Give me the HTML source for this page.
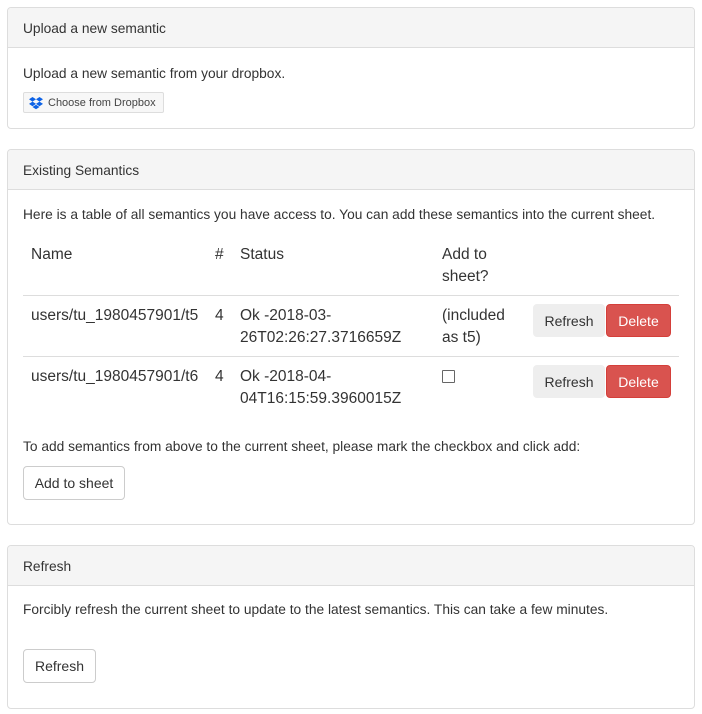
<!DOCTYPE html>
<html><head><meta charset="utf-8"><style>
*{box-sizing:border-box}
body{margin:0;width:702px;height:714px;background:#fff;font-family:"Liberation Sans",Arial,sans-serif;font-size:13.75px;color:#333;position:relative;overflow:hidden}
.panel{position:absolute;left:7px;width:688px;border:1px solid #ddd;border-radius:4px;background:#fff}
.hd{height:40px;background:#f5f5f5;border-bottom:1px solid #ddd;padding:0 15px;line-height:41px;border-radius:3px 3px 0 0}
.a{position:absolute;white-space:nowrap}
.t{font-size:15.5px;line-height:22px}
.btn{position:absolute;border:1px solid #ccc;border-radius:4px;background:#fff;text-align:center;font-size:14px;line-height:32px;color:#333}
.hr{position:absolute;left:23px;width:656px;height:1px;background:#ddd}
</style></head><body>
<div class="panel" style="top:7px;height:122px"><div class="hd">Upload a new semantic</div></div>
<div class="a" style="left:23px;top:64px;line-height:20px">Upload a new semantic from your dropbox.</div>
<div class="a" style="left:23px;top:92px;width:141px;height:21px;border:1px solid #ddd;border-radius:2px;background:#f7f7f7;font-size:11px;line-height:20px;color:#444;padding-left:24px">Choose from Dropbox
<svg style="position:absolute;left:5px;top:4px" width="14" height="13" viewBox="0 0 14 13"><path fill="#0d62e6" d="M3.5 0L0 2.3l3.5 2.3L7 2.3zM10.5 0L7 2.3l3.5 2.3L14 2.3zM0 6.9l3.5 2.3L7 6.9 3.5 4.6zM10.5 4.6L7 6.9l3.5 2.3L14 6.9zM3.5 10l3.5 2.3 3.5-2.3L7 7.7z"/></svg></div>

<div class="panel" style="top:149px;height:376px"><div class="hd">Existing Semantics</div></div>
<div class="a" style="left:23px;top:205px;line-height:20px">Here is a table of all semantics you have access to. You can add these semantics into the current sheet.</div>
<div class="a t" style="left:31px;top:244px">Name</div>
<div class="a t" style="left:215px;top:244px">#</div>
<div class="a t" style="left:240px;top:244px">Status</div>
<div class="a t" style="left:442px;top:244px">Add to<br>sheet?</div>
<div class="hr" style="top:295px"></div>
<div class="a t" style="left:31px;top:305px">users/tu_1980457901/t5</div>
<div class="a t" style="left:215px;top:305px">4</div>
<div class="a t" style="left:240px;top:305px">Ok -2018-03-<br>26T02:26:27.3716659Z</div>
<div class="a t" style="left:442px;top:305px">(included<br>as t5)</div>
<div class="btn" style="left:533px;top:304px;width:72px;height:33px;background:#eee;border-color:#eee">Refresh</div>
<div class="btn" style="left:606px;top:304px;width:65px;height:33px;background:#d9534f;border-color:#d43f3a;color:#fff">Delete</div>
<div class="hr" style="top:356px"></div>
<div class="a t" style="left:31px;top:366px">users/tu_1980457901/t6</div>
<div class="a t" style="left:215px;top:366px">4</div>
<div class="a t" style="left:240px;top:366px">Ok -2018-04-<br>04T16:15:59.3960015Z</div>
<div class="a" style="left:442px;top:370px;width:13px;height:13px;border:1px solid #666;border-radius:1px"></div>
<div class="btn" style="left:533px;top:365px;width:72px;height:33px;background:#eee;border-color:#eee">Refresh</div>
<div class="btn" style="left:606px;top:365px;width:65px;height:33px;background:#d9534f;border-color:#d43f3a;color:#fff">Delete</div>
<div class="a" style="left:23px;top:437px;line-height:20px">To add semantics from above to the current sheet, please mark the checkbox and click add:</div>
<div class="btn" style="left:23px;top:466px;width:102px;height:34px">Add to sheet</div>

<div class="panel" style="top:545px;height:164px"><div class="hd">Refresh</div></div>
<div class="a" style="left:23px;top:600px;line-height:20px">Forcibly refresh the current sheet to update to the latest semantics. This can take a few minutes.</div>
<div class="btn" style="left:23px;top:649px;width:73px;height:34px">Refresh</div>
</body></html>
